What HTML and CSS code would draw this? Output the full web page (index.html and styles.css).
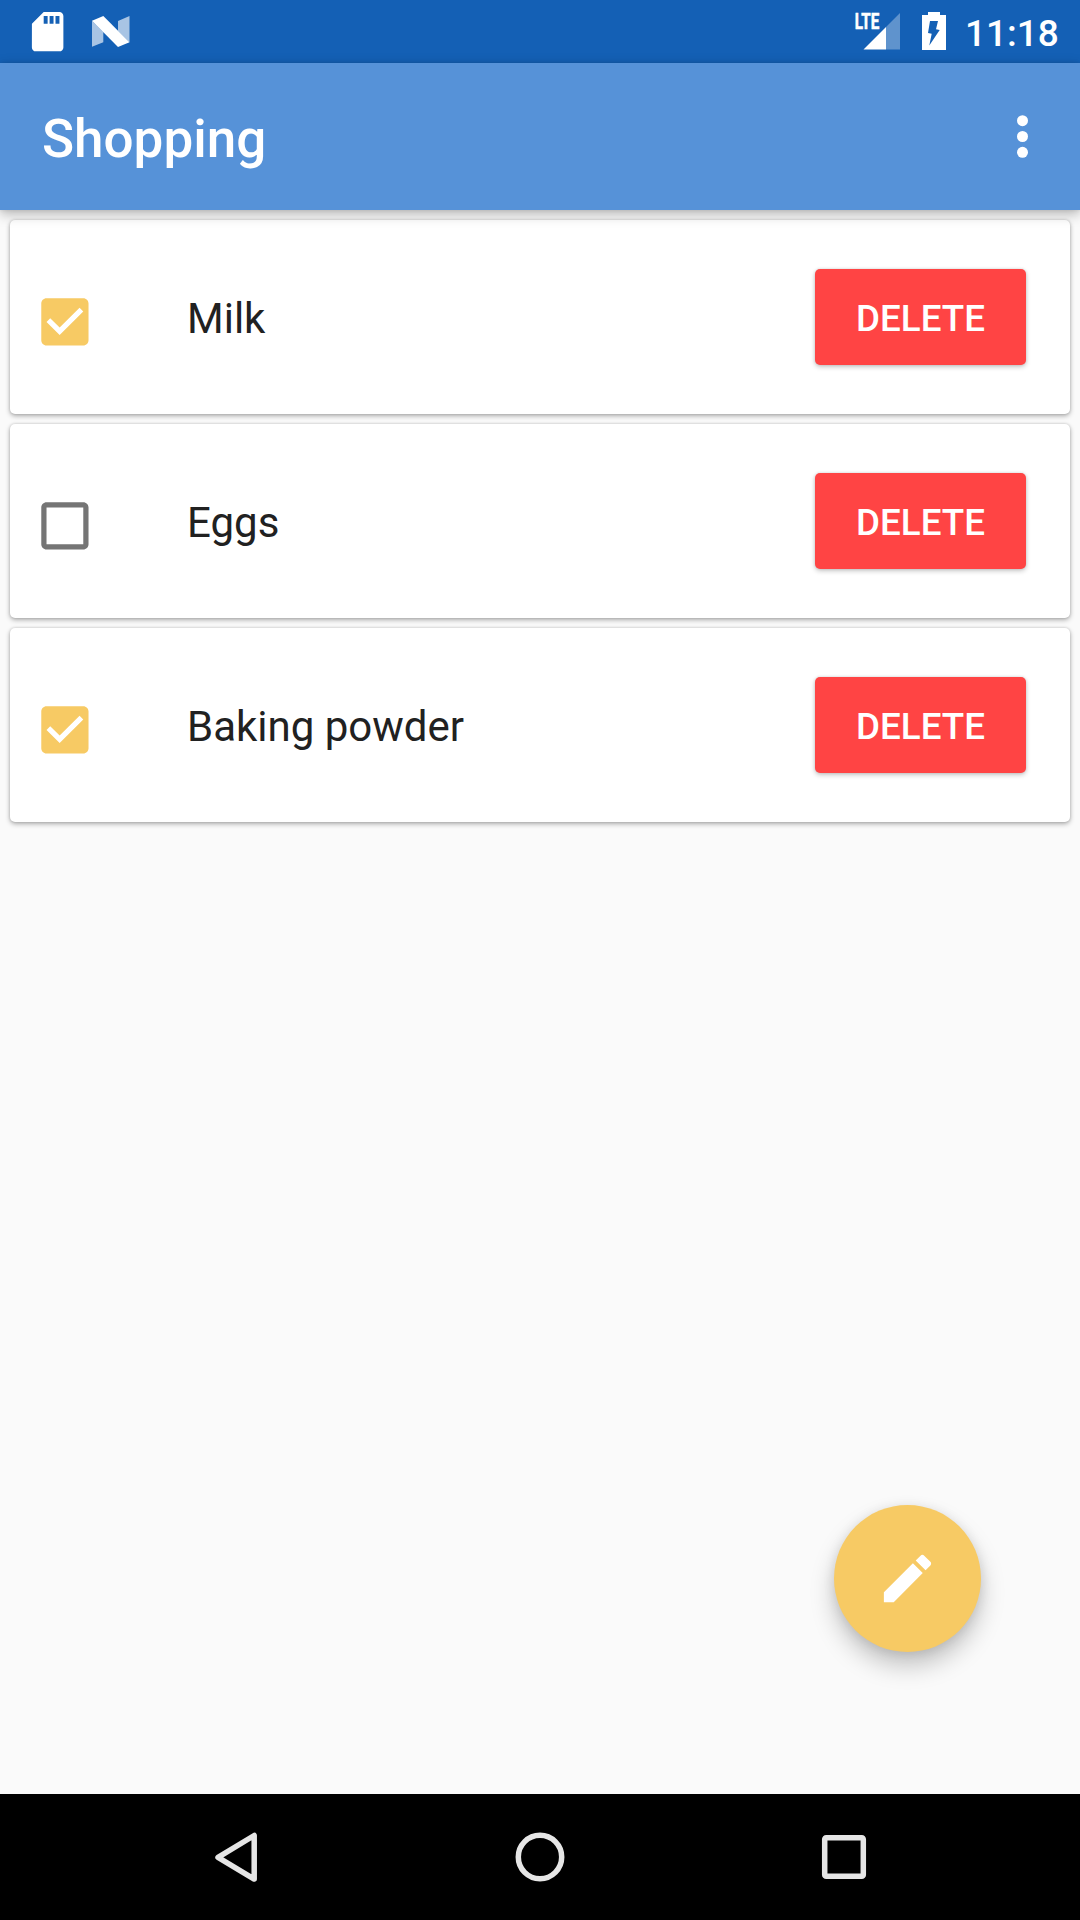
FILE: index.html
```html
<!DOCTYPE html>
<html lang="en">
<head>
<meta charset="utf-8">
<title>Shopping</title>
<link rel="stylesheet" href="styles.css">
</head>
<body>
<svg class="defs" width="0" height="0">
  <symbol id="checked" viewBox="0 0 24 24"><path d="M19 3H5c-1.11 0-2 .9-2 2v14c0 1.1.89 2 2 2h14c1.11 0 2-.9 2-2V5c0-1.1-.89-2-2-2zm-9 14l-5-5 1.41-1.41L10 14.17l7.59-7.59L19 8l-9 9z"/></symbol>
  <symbol id="unchecked" viewBox="0 0 24 24"><path d="M19 5v14H5V5h14m0-2H5c-1.1 0-2 .9-2 2v14c0 1.1.9 2 2 2h14c1.1 0 2-.9 2-2V5c0-1.1-.9-2-2-2z"/></symbol>
</svg>
<div class="screen">
  <header class="status-bar">
    <svg class="sd-icon" viewBox="0 0 24 24"><path d="M18 2h-8L4.02 8 4 20c0 1.1.9 2 2 2h12c1.1 0 2-.9 2-2V4c0-1.1-.9-2-2-2zm-6 6h-2V4h2v4zm3 0h-2V4h2v4zm3 0h-2V4h2v4z"/></svg>
    <svg class="n-icon" viewBox="0 0 40 63">
      <path class="faint" d="M1 20.7 12.3 32v10.3L1 46.8zM27 21l11.5-5v26.3L27 31z"/>
      <path d="M1 20.7 12.3 16l26.2 26.3L27 47z"/>
    </svg>
    <div class="spacer"></div>
    <svg class="signal-icon" viewBox="0 0 48 63">
      <path class="faint signal-off" d="M34 27 48 13v36.5H34z"/>
      <path d="M11.500 49.500 34 27v22.500z"/>
      <text class="lte" x="2.700" y="29" textLength="24.500" lengthAdjust="spacingAndGlyphs">LTE</text>
    </svg>
    <svg class="battery-icon" viewBox="0 0 24 63">
      <path fill-rule="evenodd" d="M0 15h6v-3h12v3h6v35H0zM8 21 6 33l3.700.700L7.300 45.500 17.700 30l-3.700-.700L16 21z"/>
    </svg>
    <span class="clock">11:18</span>
  </header>
  <div class="app-bar">
    <h1 class="title">Shopping</h1>
    <svg class="more-icon" viewBox="0 0 12 44"><circle cx="5.500" cy="5.700" r="5.500"/><circle cx="5.500" cy="21.500" r="5.500"/><circle cx="5.500" cy="37.300" r="5.500"/></svg>
  </div>
  <main class="list">
    <div class="card">
      <svg class="checkbox on"><use href="#checked"/></svg>
      <span class="item">Milk</span>
      <button class="delete">DELETE</button>
    </div>
    <div class="card">
      <svg class="checkbox"><use href="#unchecked"/></svg>
      <span class="item">Eggs</span>
      <button class="delete">DELETE</button>
    </div>
    <div class="card">
      <svg class="checkbox on"><use href="#checked"/></svg>
      <span class="item">Baking powder</span>
      <button class="delete">DELETE</button>
    </div>
  </main>
  <button class="fab" aria-label="Add item">
    <svg class="edit-icon" viewBox="0 0 24 24"><path d="M3 17.250V21h3.750L17.810 9.940l-3.750-3.750L3 17.250zM20.710 7.040c.39-.39.39-1.020 0-1.410l-2.340-2.340c-.39-.39-1.020-.39-1.410 0l-1.830 1.830 3.750 3.750 1.830-1.830z"/></svg>
  </button>
  <nav class="nav-bar">
    <svg class="nav-icon" viewBox="0 0 60 60"><path d="M12 30.300 48.200 8.500v43.600z"/></svg>
    <svg class="nav-icon" viewBox="0 0 60 60"><circle cx="30" cy="30" r="21.700"/></svg>
    <svg class="nav-icon" viewBox="0 0 60 60"><rect x="10.700" y="10.700" width="38.600" height="38.600" rx="1.500"/></svg>
  </nav>
</div>
</body>
</html>
```

FILE: styles.css
```css
* { box-sizing: border-box; }
body { margin: 0; font-family: Roboto, sans-serif; background: #fafafa; }
svg { display: block; flex: none; fill: #fff; }
button { border: 0; padding: 0; font-family: inherit; }
.defs { position: absolute; }

.screen { position: relative; display: flex; flex-direction: column; width: 1080px; height: 1920px; overflow: hidden; }

.status-bar { display: flex; align-items: center; height: 63px; padding: 0 22px 0 24px; background: #1460b5; }
.sd-icon { width: 47.25px; height: 47.25px; }
.n-icon { width: 40px; height: 63px; margin-left: 19.5px; }
.faint { fill-opacity: .63; }
.signal-off { fill-opacity: .32; }
.spacer { flex: 1; }
.signal-icon { width: 48px; height: 63px; margin-right: 22px; }
.lte { font-size: 22px; font-weight: 700; stroke: #fff; stroke-width: .6; }
.battery-icon { width: 24px; height: 63px; margin-right: 19px; }
.clock { width: 93px; color: #fff; font-size: 37px; font-weight: 500; line-height: 60px; padding-top: 4px; white-space: nowrap; }

.app-bar { position: relative; z-index: 1; display: flex; align-items: center; justify-content: space-between; height: 147px; padding: 0 51.5px 0 42px; background: #5692d8; box-shadow: 0 4px 12px rgba(0, 0, 0, .28), 0 0 4px rgba(0, 0, 0, .1); }
.title { margin: 4px 0 0; color: #fff; font-size: 53px; font-weight: 500; line-height: 62px; }
.more-icon { width: 12px; height: 44px; overflow: visible; }

.list { display: flex; flex: 1; flex-direction: column; gap: 10px; padding: 10px; }
.card { display: flex; align-items: center; height: 194px; padding: 0 44px 0 23px; border-radius: 5px; background: #fff; box-shadow: 0 2px 5px rgba(0, 0, 0, .3), 0 0 3px rgba(0, 0, 0, .16); }
.checkbox { width: 63px; height: 63px; margin-top: 9px; fill: #757575; transform: translate(.4px, .4px); }
.checkbox.on { fill: #f7ca64; }
.item { flex: 1; margin-left: 91px; padding-top: 3px; color: #212121; font-size: 42px; line-height: 50px; }
.delete { width: 211px; height: 96px; padding-top: 3px; border-radius: 5px; background: #f44; color: #fff; font-size: 36.75px; font-weight: 500; line-height: 44px; box-shadow: 0 2px 5px rgba(0, 0, 0, .22), 0 0 3px rgba(0, 0, 0, .12); }

.fab { position: absolute; right: 99px; bottom: 268px; display: flex; align-items: center; justify-content: center; width: 147px; height: 147px; border-radius: 50%; background: #f7ca64; box-shadow: 0 14px 24px rgba(0, 0, 0, .22), 0 2px 12px rgba(0, 0, 0, .1); }
.edit-icon { width: 63px; height: 63px; }

.nav-bar { display: flex; align-items: center; justify-content: center; gap: 244px; height: 126px; background: #000; }
.nav-icon { width: 60px; height: 60px; fill: none; stroke: #e6e6e6; stroke-width: 5.5; stroke-linejoin: round; }
```
